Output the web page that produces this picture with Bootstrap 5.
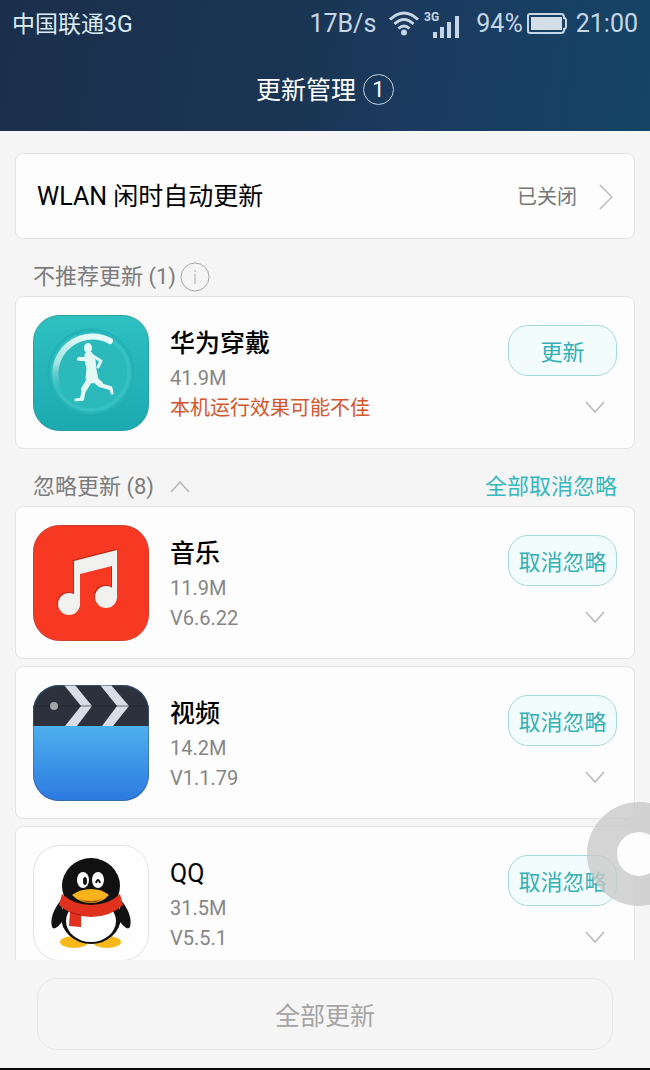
<!DOCTYPE html>
<html lang="zh-CN">
  <head>
    <meta charset="UTF-8" />
    <meta name="viewport" content="width=device-width, initial-scale=1.0" />
    <title>更新管理</title>
    <link
      rel="stylesheet"
      href="https://cdn.jsdelivr.net/npm/bootstrap@5.3.3/dist/css/bootstrap.min.css"
    />
    <script src="https://cdn.jsdelivr.net/npm/bootstrap@5.3.3/dist/js/bootstrap.bundle.min.js"></script>
    <style>
      body {
        font-family: Roboto, "Noto Sans CJK SC", sans-serif;
        background: #f5f5f5;
        color: #000;
      }
      svg {
        display: block;
        flex-shrink: 0;
      }

      /* Header */
      .top-area {
        background: linear-gradient(100deg, #1a2f4c 0%, #1a3553 45%, #1b3b60 65%, #144466 100%);
        color: #fff;
      }
      .status-bar {
        height: 47px;
        padding: 0 12px;
        font-size: 25px;
        color: #c6d6e6;
      }
      .carrier {
        padding-top: 3px;
        font-size: 23px;
        color: #dcecf6;
      }
      .title-bar {
        height: 84px;
        gap: 7px;
      }
      .title-bar h1 {
        padding-top: 4px;
        font-size: 25px;
        font-weight: 400;
      }
      .count-circle {
        width: 31px;
        height: 31px;
        border: 1px solid #c3d2e0;
        font-size: 22px;
      }

      /* Content */
      .page-body {
        padding: 22px 15px 0;
        min-height: 0;
      }
      .panel {
        background: #fdfdfd;
        border: 1px solid #e3e3e3;
        border-radius: 8px;
      }
      .wlan-row {
        height: 86px;
        padding: 2px 21px 0;
        font-size: 25px;
        color: #000;
      }
      .wlan-state {
        font-size: 20px;
        color: #767676;
        gap: 22px;
      }
      .section-head {
        height: 57px;
        padding: 18px 18px 0;
        font-size: 22px;
        line-height: 40px;
        color: #7b7b7b;
      }
      .section-head h2 {
        font-size: 22px;
        line-height: 40px;
        font-weight: 400;
      }
      .teal-link {
        color: #35b8bc;
      }
      .app-card {
        height: 153px;
        padding: 18px 17px;
        gap: 21px;
        flex-shrink: 0;
      }
      .app-list {
        gap: 7px;
      }
      .app-name {
        padding-top: 2px;
        font-size: 25px;
        line-height: 38px;
        font-weight: 500;
      }
      .app-name.latin {
        font-weight: 400;
      }
      .app-info {
        font-size: 20px;
        line-height: 30px;
        color: #858585;
      }
      .app-warn {
        color: #d4562b;
      }
      .app-actions {
        padding-top: 10px;
        gap: 10px;
      }
      .btn-pill {
        width: 109px;
        height: 51px;
        padding: 3px 0 0;
        border: 1px solid #a5dadb;
        border-radius: 20px;
        background: #f3fcfc;
        color: #35b0b5;
        font-size: 22px;
      }
      .btn-bare {
        width: 44px;
        height: 42px;
        padding: 0;
        border: 0;
      }

      /* Footer */
      .bottom-area {
        padding: 18px 37px;
        border-bottom: 2px solid #0a0a0a;
      }
      .btn-all,
      .btn-all:disabled {
        height: 72px;
        padding: 5px 0 0;
        border: 1px solid #e8e8e8;
        border-radius: 20px;
        background: #f5f5f5;
        color: #a5a5a5;
        font-size: 25px;
        opacity: 1;
      }

      /* Floating touch button, half hidden behind the window edge */
      .touch-area {
        right: 0;
        bottom: 164px;
        width: 63px;
        height: 104px;
        overflow: hidden;
      }
      .touch-dot {
        flex: 0 0 104px;
        height: 104px;
        padding: 0;
        border: 30px solid rgba(200, 200, 200, 0.78);
        background: #fdfdfd;
        background-clip: padding-box;
      }
    </style>
  </head>
  <body class="vh-100 overflow-hidden position-relative d-flex flex-column">
    <header class="top-area">
      <div class="status-bar d-flex align-items-center justify-content-between">
        <span class="carrier">中国联通3G</span>
        <div class="d-flex align-items-center">
          <span class="me-2 pe-1">17B/s</span>
          <svg width="32" height="25" viewBox="0 0 32 25" fill="none" stroke="#c6d6e6" stroke-width="3" aria-hidden="true">
            <path d="M2 8.500Q16-4.500 30 8.500" />
            <path d="M6.500 13Q16 4 25.500 13" />
            <path d="M10.500 17.500Q16 12.500 21.500 17.500" />
            <circle cx="16" cy="21.500" r="3" fill="#c6d6e6" stroke="none" />
          </svg>
          <svg class="ms-1 me-3" width="36" height="32" viewBox="0 0 36 32" fill="#c6d6e6" aria-hidden="true">
            <text x="0" y="13" font-size="12" font-weight="700">3G</text>
            <path d="M9 24h4v6H9zM16 19h4v11h-4zM23 14h4v16h-4zM31 8h4v22h-4z" />
          </svg>
          <span>94%</span>
          <svg class="mx-1 me-2" width="41" height="21" viewBox="0 0 41 21" aria-hidden="true">
            <path d="M3 1h31q3 0 3 3v1q2 0 2 3v5q0 3-2 3v1q0 3-3 3H3q-2 0-2-2V3q0-2 2-2z" fill="none" stroke="#c6d6e6" stroke-width="2" />
            <rect x="4" y="4" width="31" height="13" fill="#d3dde7" />
          </svg>
          <span>21:00</span>
        </div>
      </div>
      <div class="title-bar d-flex align-items-center justify-content-center">
        <h1 class="mb-0">更新管理</h1>
        <span class="count-circle rounded-circle d-flex align-items-center justify-content-center">1</span>
      </div>
    </header>

    <main class="page-body flex-fill overflow-hidden">
      <a href="#wlan" class="panel wlan-row d-flex align-items-center justify-content-between text-decoration-none">
        <span>WLAN 闲时自动更新</span>
        <span class="wlan-state d-flex align-items-center">
          已关闭
          <svg width="14" height="26" viewBox="0 0 14 26" fill="none" stroke="#bdbdbd" stroke-width="1.500">
            <path d="M1 1l12 12L1 25" />
          </svg>
        </span>
      </a>

      <div class="section-head d-flex align-items-center">
        <h2 class="mb-0 me-1">不推荐更新 (1)</h2>
        <button type="button" class="btn p-0 border-0" aria-label="说明">
          <svg width="30" height="30" viewBox="0 0 30 30" fill="none" stroke="#a9a9a9">
            <circle cx="15" cy="15" r="14" />
            <path d="M15 12v10M15 8v2" />
          </svg>
        </button>
      </div>

      <article class="panel app-card d-flex">
        <svg width="116" height="116" viewBox="0 0 116 116" aria-hidden="true">
          <defs>
            <linearGradient id="fitBg" x1="0" y1="0" x2="0" y2="1">
              <stop offset="0" stop-color="#2fc0c2" />
              <stop offset="1" stop-color="#1ba9b0" />
            </linearGradient>
            <linearGradient id="fitRing" x1="0.500" y1="0" x2="0.200" y2="1">
              <stop offset="0" stop-color="#e2f9f7" />
              <stop offset="0.550" stop-color="#a3e2e1" />
              <stop offset="1" stop-color="#3fbfc2" stop-opacity="0" />
            </linearGradient>
          </defs>
          <rect x="0.500" y="0.500" width="115" height="115" rx="26" fill="url(#fitBg)" stroke="#2b9c9f" />
          <circle cx="58" cy="57" r="43" fill="#25b4b8" stroke="#1fa6ab" stroke-opacity="0.600" />
          <circle cx="58" cy="57" r="38" fill="#2bb9bc" stroke="#36c0c2" stroke-width="4" />
          <path d="M77 26A37 37 0 0 0 30 81" fill="none" stroke="url(#fitRing)" stroke-width="6" stroke-linecap="round" />
          <!-- runner -->
          <g fill="#e4f8f6" stroke="#e4f8f6" stroke-linecap="round" stroke-linejoin="round">
            <ellipse cx="55" cy="33" rx="4" ry="5" stroke="none" />
            <path d="M54 37h4l2 3 2 5 1 10 2 9-5 4-6-1-1-4 1-9-2-9 0-5z" stroke-width="1" />
            <path d="M60 41l8 5-3 6" fill="none" stroke-width="3" />
            <path d="M53 44l-7 0" fill="none" stroke-width="4" />
            <path d="M56 66l-5 8" fill="none" stroke-width="6" />
            <path d="M51 74l-2 10" fill="none" stroke-width="4" />
            <path d="M49 84l-6 1" fill="none" stroke-width="3" />
            <path d="M61 64l6 5" fill="none" stroke-width="6" />
            <path d="M67 70l10 3" fill="none" stroke-width="4" />
            <path d="M78 73l1 5" fill="none" stroke-width="3" />
          </g>
        </svg>
        <div class="align-self-center flex-fill">
          <h3 class="app-name mb-0">华为穿戴</h3>
          <div class="app-info">41.9M</div>
          <div class="app-info app-warn">本机运行效果可能不佳</div>
        </div>
        <div class="app-actions d-flex flex-column align-items-end">
          <button type="button" class="btn btn-pill">更新</button>
          <button type="button" class="btn btn-bare d-flex align-items-center justify-content-center" aria-label="展开">
            <svg width="20" height="12" viewBox="0 0 20 12" fill="none" stroke="#b9b9b9" stroke-width="1.500">
              <path d="M1 1l9 10 9-10" />
            </svg>
          </button>
        </div>
      </article>

      <div class="section-head d-flex align-items-center">
        <h2 class="mb-0 me-3">忽略更新 (8)</h2>
        <button type="button" class="btn p-0 border-0" aria-label="收起">
          <svg width="20" height="12" viewBox="0 0 20 12" fill="none" stroke="#b9b9b9" stroke-width="1.500">
            <path d="M1 11l9-10 9 10" />
          </svg>
        </button>
        <a href="#restore" class="teal-link text-decoration-none ms-auto">全部取消忽略</a>
      </div>

      <div class="app-list d-flex flex-column">
        <article class="panel app-card d-flex">
          <svg width="116" height="116" viewBox="0 0 116 116" aria-hidden="true">
            <rect x="0.500" y="0.500" width="115" height="115" rx="26" fill="#f73823" stroke="#c9402f" />
            <g fill="#b92a1c" transform="translate(-1 -1)">
              <path d="M41 36l43-11v48h-5V41l-32 8v31h-6z" />
              <circle cx="36" cy="79" r="11" />
              <circle cx="73" cy="72" r="11" />
            </g>
            <g fill="#f1f1ef">
              <path d="M41 36l43-11v48h-5V41l-32 8v31h-6z" />
              <circle cx="36" cy="79" r="11" />
              <circle cx="73" cy="72" r="11" />
            </g>
          </svg>
          <div class="align-self-center flex-fill">
            <h3 class="app-name mb-0">音乐</h3>
            <div class="app-info">11.9M</div>
            <div class="app-info">V6.6.22</div>
          </div>
          <div class="app-actions d-flex flex-column align-items-end">
            <button type="button" class="btn btn-pill">取消忽略</button>
            <button type="button" class="btn btn-bare d-flex align-items-center justify-content-center" aria-label="展开">
              <svg width="20" height="12" viewBox="0 0 20 12" fill="none" stroke="#b9b9b9" stroke-width="1.500">
                <path d="M1 1l9 10 9-10" />
              </svg>
            </button>
          </div>
        </article>

        <article class="panel app-card d-flex">
          <svg width="116" height="116" viewBox="0 0 116 116" aria-hidden="true">
            <defs>
              <linearGradient id="videoBg" x1="0" y1="0" x2="0" y2="1">
                <stop offset="0.350" stop-color="#4eb0ee" />
                <stop offset="1" stop-color="#2c79e0" />
              </linearGradient>
              <clipPath id="videoClip">
                <rect width="116" height="116" rx="26" />
              </clipPath>
            </defs>
            <g clip-path="url(#videoClip)">
              <rect width="116" height="116" fill="url(#videoBg)" />
              <rect width="116" height="41" fill="#2d303d" />
              <path d="M31 0h11l17 21-15 20H32l16-20zM67 0h11l18 21-16 20H69l15-20z" fill="#d8dde8" />
              <path d="M0 21h116" stroke="#1b1d27" stroke-opacity="0.600" />
              <circle cx="21" cy="21" r="4" fill="#a3a5a8" />
            </g>
            <rect x="0.500" y="0.500" width="115" height="115" rx="26" fill="none" stroke="#3a5f88" stroke-opacity="0.600" />
          </svg>
          <div class="align-self-center flex-fill">
            <h3 class="app-name mb-0">视频</h3>
            <div class="app-info">14.2M</div>
            <div class="app-info">V1.1.79</div>
          </div>
          <div class="app-actions d-flex flex-column align-items-end">
            <button type="button" class="btn btn-pill">取消忽略</button>
            <button type="button" class="btn btn-bare d-flex align-items-center justify-content-center" aria-label="展开">
              <svg width="20" height="12" viewBox="0 0 20 12" fill="none" stroke="#b9b9b9" stroke-width="1.500">
                <path d="M1 1l9 10 9-10" />
              </svg>
            </button>
          </div>
        </article>

        <article class="panel app-card d-flex">
          <svg width="116" height="116" viewBox="0 0 116 116" aria-hidden="true">
            <rect x="0.500" y="0.500" width="115" height="115" rx="26" fill="#fefefe" stroke="#e2e2e2" />
            <!-- feet -->
            <ellipse cx="41" cy="97" rx="14" ry="6" fill="#f8b81c" />
            <ellipse cx="74" cy="97" rx="14" ry="6" fill="#f8b81c" />
            <!-- wings and body -->
            <path d="M28 55Q16 70 19 82q3 5 12-8zM88 55q12 15 9 27-3 5-12-8z" fill="#111" />
            <ellipse cx="58" cy="72" rx="30" ry="27" fill="#111" />
            <ellipse cx="58" cy="76" rx="25" ry="21" fill="#fff" />
            <ellipse cx="58" cy="41" rx="29" ry="28" fill="#111" />
            <!-- scarf -->
            <path d="M29 49q12 11 29 11t29-11l3 11q-13 12-32 12-19 0-32-12z" fill="#e0301e" />
            <path d="M37 66l11 3v13l-12-1z" fill="#e0301e" />
            <path d="M37 67q5 2 11 3" fill="none" stroke="#a81f14" />
            <!-- face -->
            <ellipse cx="50" cy="35" rx="6" ry="8" fill="#fff" />
            <ellipse cx="65" cy="35" rx="6" ry="8" fill="#fff" />
            <ellipse cx="52" cy="36" rx="2" ry="4" fill="#111" />
            <path d="M63 38q2-6 4 0" fill="none" stroke="#111" stroke-width="2" />
            <path d="M39 50q8-6 19-6t18 6q-7 8-18 8t-19-8z" fill="#f8b21c" />
            <path d="M46 54q12 4 24 0-12 7-24 0z" fill="#a3470f" />
          </svg>
          <div class="align-self-center flex-fill">
            <h3 class="app-name latin mb-0">QQ</h3>
            <div class="app-info">31.5M</div>
            <div class="app-info">V5.5.1</div>
          </div>
          <div class="app-actions d-flex flex-column align-items-end">
            <button type="button" class="btn btn-pill">取消忽略</button>
            <button type="button" class="btn btn-bare d-flex align-items-center justify-content-center" aria-label="展开">
              <svg width="20" height="12" viewBox="0 0 20 12" fill="none" stroke="#b9b9b9" stroke-width="1.500">
                <path d="M1 1l9 10 9-10" />
              </svg>
            </button>
          </div>
        </article>
      </div>
    </main>

    <footer class="bottom-area">
      <button type="button" class="btn btn-all w-100" disabled>全部更新</button>
    </footer>

    <div class="touch-area position-absolute d-flex">
      <button type="button" class="touch-dot rounded-circle" aria-label="悬浮按钮"></button>
    </div>
  </body>
</html>
